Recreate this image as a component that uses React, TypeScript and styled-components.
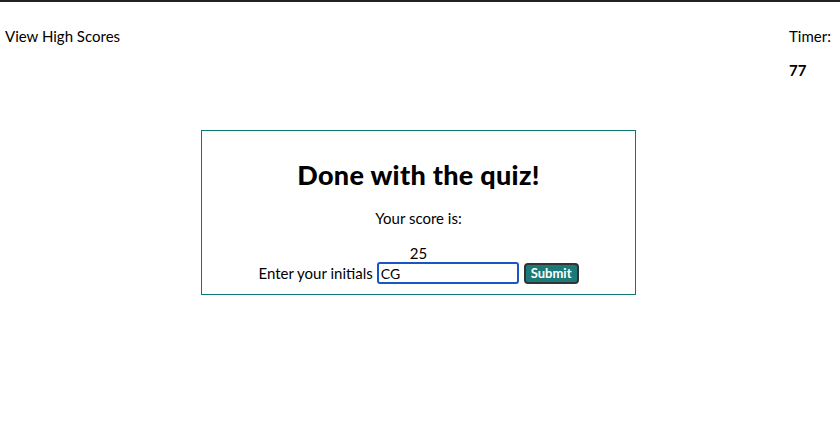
import React from "react";
import styled, { createGlobalStyle } from "styled-components";

const Global = createGlobalStyle`
  html, body { margin: 0; padding: 0; background: #fff; }
  body { font-family: "Lato", "Open Sans", sans-serif; color: #000; }
`;

const Page = styled.div`
  border-top: 2px solid #222;
  width: 840px;
  min-height: 443px;
`;

const Header = styled.header`
  display: flex;
  justify-content: space-between;
  align-items: flex-start;
  padding: 24px 8px 0 5px;
`;

const NavLink = styled.a`
  font-size: 15px;
  line-height: 20px;
  color: #000;
  text-decoration: none;
  cursor: pointer;
`;

const TimerBox = styled.div`
  display: flex;
  flex-direction: column;
  gap: 14px;
  width: 43px;
`;

const TimerText = styled.div<{ $strong?: boolean }>`
  font-size: 15px;
  line-height: 20px;
  font-weight: ${(p) => (p.$strong ? 700 : 400)};
`;

const Card = styled.section`
  width: 433px;
  margin: 50px 0 0 201px;
  border: 1px solid #0f7773;
  padding: 28px 0 10px;
  display: flex;
  flex-direction: column;
  align-items: center;
`;

const Title = styled.h1`
  margin: 0;
  font-size: 27px;
  line-height: 32px;
  font-weight: 900;
  letter-spacing: 0.3px;
`;

const Line = styled.p<{ $gap: number }>`
  margin: ${(p) => p.$gap}px 0 0;
  font-size: 15px;
  line-height: 20px;
`;

const FormRow = styled.form`
  display: flex;
  align-items: center;
  gap: 4px;
  margin-top: -1px;
  font-size: 15px;
`;

const Input = styled.input`
  width: 134px;
  height: 16px;
  padding: 1px 2px;
  border: 2px solid #1a55c4;
  border-radius: 3px;
  outline: none;
  font-family: inherit;
  font-size: 14px;
  color: #000;
`;

const SubmitButton = styled.button`
  margin-left: 1px;
  height: 21px;
  padding: 0 5px;
  background: #1b7a78;
  color: #fff;
  border: 2px solid #333;
  border-radius: 4px;
  font-family: inherit;
  font-size: 13px;
  font-weight: 700;
  line-height: 15px;
`;

export default function App() {
  return (
    <Page>
      <Global />
      <Header>
        <NavLink>View High Scores</NavLink>
        <TimerBox>
          <TimerText>Timer:</TimerText>
          <TimerText $strong>77</TimerText>
        </TimerBox>
      </Header>
      <Card>
        <Title>Done with the quiz!</Title>
        <Line $gap={17}>Your score is:</Line>
        <Line $gap={15}>25</Line>
        <FormRow onSubmit={(e) => e.preventDefault()}>
          <span>Enter your initials</span>
          <Input defaultValue="CG" />
          <SubmitButton type="submit">Submit</SubmitButton>
        </FormRow>
      </Card>
    </Page>
  );
}
